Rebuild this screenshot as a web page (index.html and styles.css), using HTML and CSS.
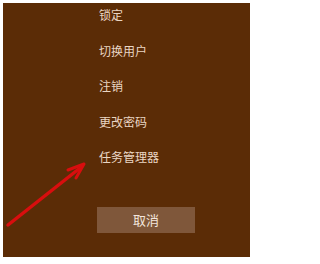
FILE: index.html
```html
<!DOCTYPE html>
<html>
<head>
<meta charset="utf-8">
<link rel="stylesheet" href="styles.css">
</head>
<body>
<div class="panel">
  <ul class="menu">
    <li>锁定</li>
    <li>切换用户</li>
    <li>注销</li>
    <li>更改密码</li>
    <li>任务管理器</li>
  </ul>
  <div class="cancel">取消</div>
  <svg class="arrow" width="255" height="264" viewBox="0 0 255 264">
    <line x1="8" y1="225" x2="80" y2="168" stroke="#d80e0e" stroke-width="3.5" stroke-linecap="round"/>
    <path d="M84 164 L68 170 M84 164 L76 178" stroke="#d80e0e" stroke-width="3" stroke-linecap="round" fill="none"/>
  </svg>
</div>
</body>
</html>
```
FILE: styles.css
```css
html, body {
  margin: 0;
  padding: 0;
  background: #ffffff;
}
body {
  width: 255px;
  height: 264px;
  overflow: hidden;
  font-family: "Noto Sans CJK SC", "Noto Sans", sans-serif;
}
.panel {
  margin: 3px;
  width: 247px;
  height: 254px;
  background: #5b2c06;
  padding: 3px 0 0 94px;
  box-sizing: border-box;
}
.menu {
  list-style: none;
  margin: 0;
  padding: 0 0 0 2px;
  display: flex;
  flex-direction: column;
  gap: 17.5px;
}
.menu li {
  color: #ead6c4;
  font-size: 12px;
  line-height: 18px;
  height: 18px;
}
.cancel {
  margin-top: 41px;
  width: 98px;
  height: 26px;
  background: #7f573a;
  color: #f3e6dc;
  font-size: 13px;
  line-height: 26px;
  text-align: center;
}
.arrow {
  position: absolute;
  left: 0;
  top: 0;
  pointer-events: none;
}
```
